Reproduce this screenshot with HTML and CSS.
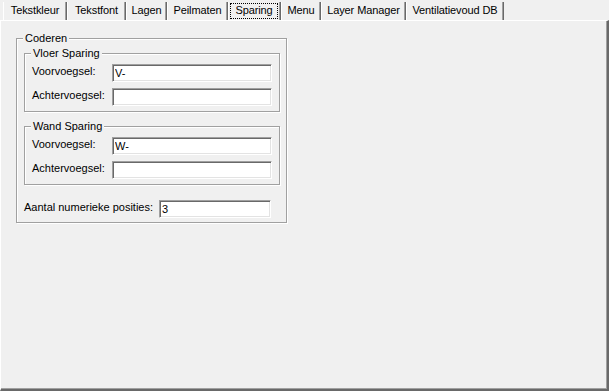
FILE: index.html
```html
<!DOCTYPE html>
<html>
  <head>
    <meta charset="UTF-8">
    <title>Sparing</title>
    <link rel="stylesheet" href="styles.css">
  </head>
  <body>
    <div class="tabs">
      <div class="tab t-kleur">Tekstkleur</div>
      <div class="tab t-font">Tekstfont</div>
      <div class="tab t-lagen">Lagen</div>
      <div class="tab t-peil">Peilmaten</div>
      <div class="tab t-sparing active"><span class="focus">Sparing</span></div>
      <div class="tab t-menu">Menu</div>
      <div class="tab t-layer">Layer Manager</div>
      <div class="tab t-vent">Ventilatievoud DB</div>
    </div>
    <div class="panel">
      <fieldset class="group outer">
        <legend>Coderen</legend>
        <fieldset class="group inner">
          <legend>Vloer Sparing</legend>
          <div class="fields">
            <label>Voorvoegsel:</label>
            <input type="text" value="V-">
            <label>Achtervoegsel:</label>
            <input type="text">
          </div>
        </fieldset>
        <fieldset class="group inner wand">
          <legend>Wand Sparing</legend>
          <div class="fields">
            <label>Voorvoegsel:</label>
            <input type="text" value="W-">
            <label>Achtervoegsel:</label>
            <input type="text">
          </div>
        </fieldset>
        <div class="count-row">
          <label>Aantal numerieke posities:</label>
          <input type="text" class="count" value="3">
        </div>
      </fieldset>
    </div>
  </body>
</html>
```

FILE: styles.css
```css
*{
    box-sizing: border-box;
}
html,body{
    margin: 0;
    height: 100%;
}
body{
    display: flex;
    flex-direction: column;
    background: #f0f0f0;
    font-family: "Liberation Sans", Arial, sans-serif;
    font-size: 11px;
    color: #000;
}
.tabs{
    display: flex;
    height: 20px;
    padding: 2px 0 0 3px;
}
.tab{
    height: 18px;
    line-height: 17px;
    text-align: center;
    border-left: 1px solid #fff;
    border-right: 1px solid #696969;
    box-shadow: inset -1px 0 0 #a0a0a0;
    white-space: nowrap;
    letter-spacing: -0.1px;
}
.t-kleur{ width: 64px; }
.t-font{ width: 59px; }
.t-lagen{ width: 41px; }
.t-peil{ width: 61px; }
.t-sparing{ width: 53px; }
.t-menu{ width: 40px; }
.t-layer{ width: 85px; }
.t-vent{ width: 98px; }
.tab.active{
    padding: 1px 2px 0 1px;
}
.focus{
    display: block;
    height: 16px;
    line-height: 14px;
    outline: 1px dotted #000;
    outline-offset: -1px;
}
.panel{
    flex: 1;
    border-top: 1px solid #fff;
    border-left: 1px solid #fff;
    border-right: 2px solid #696969;
    border-bottom: 2px solid #696969;
    box-shadow: inset -1px -1px 0 #a0a0a0;
    padding: 11px 0 0 15px;
}
.group{
    margin: 0;
    min-inline-size: 0;
    border: 1px solid #a0a0a0;
    box-shadow: 1px 1px 0 #fff, inset 1px 1px 0 #fff;
}
.group legend{
    margin-left: -1px;
    padding: 0 2px;
    line-height: 13px;
    background: #f0f0f0;
}
.outer{
    width: 271px;
    padding: 2px 6px 4px 7px;
}
.inner{
    padding: 4px 7px 5px 7px;
}
.wand{
    margin-top: 8px;
}
.fields{
    display: grid;
    grid-template-columns: 80px 160px;
    row-gap: 6px;
}
label{
    line-height: 15px;
    white-space: nowrap;
}
input{
    height: 18px;
    margin: 0;
    padding: 0 2px;
    font: inherit;
    color: #000;
    background: #fff;
    border: 1px solid;
    border-color: #a0a0a0 #fff #fff #a0a0a0;
    box-shadow: inset 1px 1px 0 #696969, inset -1px -1px 0 #e3e3e3;
    outline: none;
}
.count-row{
    display: flex;
    margin-top: 15px;
}
.count-row label{
    width: 135px;
}
.count{
    width: 112px;
}
```
